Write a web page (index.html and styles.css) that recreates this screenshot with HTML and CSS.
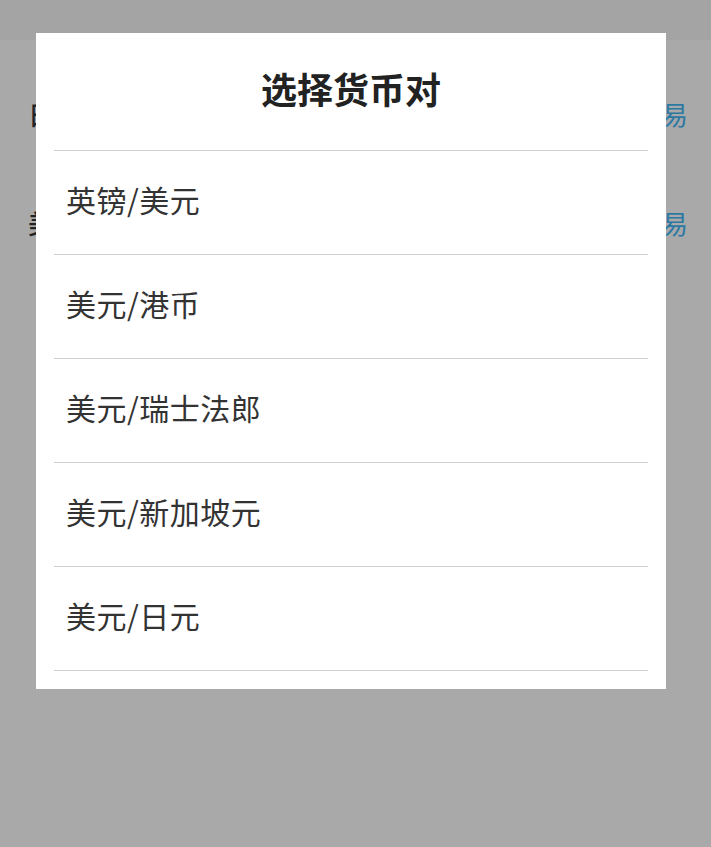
FILE: index.html
```html
<!DOCTYPE html>
<html lang="zh-CN">
<head>
<meta charset="utf-8">
<title>选择货币对</title>
<link rel="stylesheet" href="styles.css">
</head>
<body>
<div class="page">
  <div class="topbar"></div>
  <div class="rows">
    <div class="row"><span class="label">日元/美元</span><span class="action">交易</span></div>
    <div class="row"><span class="label">美元/日元</span><span class="action">交易</span></div>
  </div>
</div>
<div class="overlay"></div>
<div class="modal">
  <div class="modal-title">选择货币对</div>
  <ul class="list">
    <li class="item">英镑/美元</li>
    <li class="item">美元/港币</li>
    <li class="item">美元/瑞士法郎</li>
    <li class="item">美元/新加坡元</li>
    <li class="item">美元/日元</li>
  </ul>
</div>
</body>
</html>
```

FILE: styles.css
```css
html, body {
  margin: 0;
  padding: 0;
}
body {
  width: 711px;
  height: 847px;
  overflow: hidden;
  position: relative;
  background: #ffffff;
  font-family: "Noto Sans CJK SC", "Noto Sans", sans-serif;
}
.page {
  height: 847px;
  background: #ffffff;
}
.topbar {
  height: 40px;
  background: #f6f6f6;
}
.rows {
  padding: 21px 23px 0 28px;
}
.row {
  height: 109px;
  box-sizing: border-box;
  padding-bottom: 4px;
  display: flex;
  align-items: center;
  justify-content: space-between;
  font-size: 26px;
  color: #111;
}
.label {
  font-weight: 500;
}
.action {
  color: #1eaaf0;
}
.overlay {
  position: absolute;
  inset: 0;
  background: rgba(60, 60, 62, 0.44);
}
.modal {
  position: absolute;
  top: 33px;
  left: 36px;
  width: 630px;
  height: 656px;
  background: #ffffff;
  padding: 0 18px;
  box-sizing: border-box;
  overflow: hidden;
}
.modal-title {
  height: 118px;
  box-sizing: border-box;
  padding-bottom: 8px;
  display: flex;
  align-items: center;
  justify-content: center;
  font-size: 36px;
  font-weight: 700;
  color: #222;
  border-bottom: 1px solid #cfcfcf;
}
.list {
  list-style: none;
  margin: 0;
  padding: 0;
}
.item {
  height: 104px;
  box-sizing: border-box;
  padding: 0 0 8px 12px;
  display: flex;
  align-items: center;
  font-size: 30px;
  letter-spacing: 0.5px;
  color: #333;
  border-bottom: 1px solid #cfcfcf;
}
```
